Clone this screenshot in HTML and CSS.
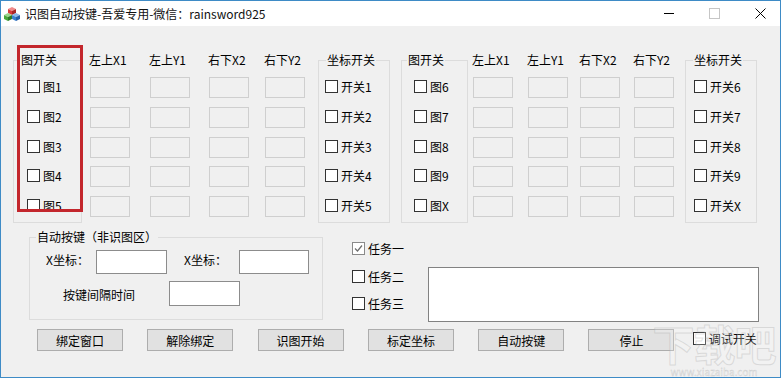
FILE: index.html
```html
<!DOCTYPE html>
<html lang="zh-CN">
<head>
  <meta charset="UTF-8" />
  <title>识图自动按键</title>
  <link rel="stylesheet" href="styles.css">
</head>
<body>

  <div class="window">
    <!-- title bar -->
    <div class="titlebar">
      <svg class="app-icon" width="16" height="16" viewBox="0 0 16 16">
        <polygon points="8,1 12,3 8,5 4,3" fill="#f08a8a"/>
        <polygon points="4,3 8,5 8,9 4,7" fill="#d83a3a"/>
        <polygon points="8,5 12,3 12,7 8,9" fill="#a82626"/>
        <polygon points="4,7 8,9 4,11 0,9" fill="#9ad48a"/>
        <polygon points="0,9 4,11 4,15 0,13" fill="#4aa83a"/>
        <polygon points="4,11 8,9 8,13 4,15" fill="#2e7a26"/>
        <polygon points="12,7 16,9 12,11 8,9" fill="#8ab8e8"/>
        <polygon points="8,9 12,11 12,15 8,13" fill="#3a82d0"/>
        <polygon points="12,11 16,9 16,13 12,15" fill="#245ea8"/>
      </svg>
      <span class="title">识图自动按键-吾爱专用-微信：rainsword925</span>
      <div class="controls">
        <span class="ctl-min"></span>
        <span class="ctl-max"></span>
        <svg class="ctl-close" width="11" height="11" viewBox="0 0 11 11">
          <path d="M0.5 0.5 L10.5 10.5 M10.5 0.5 L0.5 10.5" stroke="#000" stroke-width="1" fill="none"/>
        </svg>
      </div>
    </div>

    <div class="client">
      <!-- coordinate table -->
      <div class="coords">
        <fieldset class="grp g1">
          <legend>图开关</legend>
          <div class="chk"><span class="box"></span>图1</div>
          <div class="chk"><span class="box"></span>图2</div>
          <div class="chk"><span class="box"></span>图3</div>
          <div class="chk"><span class="box"></span>图4</div>
          <div class="chk"><span class="box"></span>图5</div>
        </fieldset>

        <div class="col x1a">
          <div class="head">左上X1</div>
          <div class="cell"></div><div class="cell"></div><div class="cell"></div><div class="cell"></div><div class="cell"></div>
        </div>
        <div class="col y1a">
          <div class="head">左上Y1</div>
          <div class="cell"></div><div class="cell"></div><div class="cell"></div><div class="cell"></div><div class="cell"></div>
        </div>
        <div class="col x2a">
          <div class="head">右下X2</div>
          <div class="cell"></div><div class="cell"></div><div class="cell"></div><div class="cell"></div><div class="cell"></div>
        </div>
        <div class="col y2a">
          <div class="head">右下Y2</div>
          <div class="cell"></div><div class="cell"></div><div class="cell"></div><div class="cell"></div><div class="cell"></div>
        </div>

        <fieldset class="grp g2">
          <legend>坐标开关</legend>
          <div class="chk"><span class="box"></span>开关1</div>
          <div class="chk"><span class="box"></span>开关2</div>
          <div class="chk"><span class="box"></span>开关3</div>
          <div class="chk"><span class="box"></span>开关4</div>
          <div class="chk"><span class="box"></span>开关5</div>
        </fieldset>

        <fieldset class="grp g3">
          <legend>图开关</legend>
          <div class="chk"><span class="box"></span>图6</div>
          <div class="chk"><span class="box"></span>图7</div>
          <div class="chk"><span class="box"></span>图8</div>
          <div class="chk"><span class="box"></span>图9</div>
          <div class="chk"><span class="box"></span>图X</div>
        </fieldset>

        <div class="col x1b">
          <div class="head">左上X1</div>
          <div class="cell"></div><div class="cell"></div><div class="cell"></div><div class="cell"></div><div class="cell"></div>
        </div>
        <div class="col y1b">
          <div class="head">左上Y1</div>
          <div class="cell"></div><div class="cell"></div><div class="cell"></div><div class="cell"></div><div class="cell"></div>
        </div>
        <div class="col x2b">
          <div class="head">右下X2</div>
          <div class="cell"></div><div class="cell"></div><div class="cell"></div><div class="cell"></div><div class="cell"></div>
        </div>
        <div class="col y2b">
          <div class="head">右下Y2</div>
          <div class="cell"></div><div class="cell"></div><div class="cell"></div><div class="cell"></div><div class="cell"></div>
        </div>

        <fieldset class="grp g4">
          <legend>坐标开关</legend>
          <div class="chk"><span class="box"></span>开关6</div>
          <div class="chk"><span class="box"></span>开关7</div>
          <div class="chk"><span class="box"></span>开关8</div>
          <div class="chk"><span class="box"></span>开关9</div>
          <div class="chk"><span class="box"></span>开关X</div>
        </fieldset>
      </div>

      <!-- auto key area -->
      <div class="auto-row">
        <fieldset class="grp auto">
          <legend>自动按键（非识图区）</legend>
          <div class="field-row">
            <span class="lbl lbl-x">X坐标：</span>
            <div class="edit"></div>
            <span class="lbl lbl-x2">X坐标：</span>
            <div class="edit edit-2"></div>
          </div>
          <div class="field-row row-gap">
            <span class="lbl lbl-gap">按键间隔时间</span>
            <div class="edit edit-gap"></div>
          </div>
        </fieldset>

        <div class="tasks">
          <div class="chk-line">
            <span class="box checked">
              <svg width="11" height="11" viewBox="0 0 11 11"><path d="M2 5.5 L4.5 8 L9 2.5" stroke="#6d6d6d" stroke-width="1.2" fill="none"/></svg>
            </span>任务一
          </div>
          <div class="chk-line"><span class="box"></span>任务二</div>
          <div class="chk-line"><span class="box"></span>任务三</div>
        </div>

        <textarea class="log"></textarea>
      </div>

      <!-- buttons -->
      <div class="buttons">
        <button>绑定窗口</button>
        <button>解除绑定</button>
        <button>识图开始</button>
        <button>标定坐标</button>
        <button>自动按键</button>
        <button>停止</button>
        <div class="chk-line debug"><span class="box"></span>调试开关</div>
      </div>
    </div>

    <div class="red-mark"></div>

    <div class="watermark">
      <div class="wm-big">下载吧</div>
      <div class="wm-url">www.xiazaiba.com</div>
    </div>
  </div>

</body>
</html>
```

FILE: styles.css
```css
body {
  margin: 0;
  background: #fff;
  font-family: "Noto Sans CJK SC", "Microsoft YaHei", sans-serif;
  font-size: 12px;
  color: #000;
}

.window {
  position: relative;
  width: 781px;
  height: 378px;
  box-sizing: border-box;
  border: 1px solid #3e8bc6;
  display: flex;
  flex-direction: column;
  overflow: hidden;
}

/* title bar */
.titlebar {
  height: 25px;
  flex: none;
  background: #fff;
  display: flex;
  align-items: center;
  padding: 0 14px 0 3px;
}

.app-icon {
  margin-right: 5px;
}

.title {
  line-height: 16px;
  color: #111;
}

.controls {
  margin-left: auto;
  display: flex;
  align-items: center;
  gap: 35px;
}

.ctl-min {
  width: 10px;
  height: 1px;
  background: #000;
}

.ctl-max {
  width: 9px;
  height: 9px;
  border: 1px solid #c6c6c6;
}

/* client area */
.client {
  flex: 1;
  background: #f0f0f0;
  padding: 27px 0 0 12px;
}

.coords {
  display: flex;
  align-items: flex-start;
}

.grp {
  margin: 0;
  padding: 0;
  min-width: 0;
  border: 1px solid #dcdcdc;
}

.grp legend {
  padding: 0 1px;
  line-height: 14px;
}

.g1, .g2, .g3, .g4 {
  padding: 10px 0 5px;
}

.g1 { width: 69px; box-sizing: border-box; padding-left: 13px; }
.g1 legend { margin-left: -7px; }

.g2 { width: 72px; box-sizing: border-box; padding-left: 6px; margin-left: 13px; }
.g2 legend { margin-left: 1px; }

.g3 { width: 67px; box-sizing: border-box; padding-left: 12px; margin-left: 11px; }
.g3 legend { margin-left: -7px; }

.g4 { width: 72px; box-sizing: border-box; padding-left: 8px; margin-left: 11px; }
.g4 legend { margin-left: -1px; }

.chk {
  height: 21px;
  display: flex;
  align-items: center;
  gap: 3px;
  margin-bottom: 8.75px;
  position: relative;
  top: -1px;
}

.chk:last-child {
  margin-bottom: 0;
}

.box {
  width: 11px;
  height: 11px;
  flex: none;
  border: 1px solid #333;
  background: #fff;
  display: flex;
  align-items: center;
  justify-content: center;
}

.box.checked {
  border-color: #8a8a8a;
}

.col {
  width: 40px;
}

.x1a { margin-left: 8px; }
.y1a { margin-left: 20px; }
.x2a { margin-left: 19px; }
.y2a { margin-left: 16px; }
.x1b { margin-left: 5px; }
.y1b { margin-left: 15px; }
.x2b { margin-left: 12px; }
.y2b { margin-left: 14px; }

.head {
  line-height: 14px;
  margin-bottom: 10px;
  margin-left: -1px;
  white-space: nowrap;
}

.cell {
  height: 21px;
  box-sizing: border-box;
  border: 1px solid #cfcfcf;
  background: #f0f0f0;
  margin-bottom: 8.75px;
}

.cell:last-child {
  margin-bottom: 0;
}

/* auto key group */
.auto-row {
  display: flex;
  align-items: flex-start;
  margin-top: 7px;
}

.auto {
  margin-left: 16px;
  width: 294px;
  box-sizing: border-box;
  padding: 6px 0 13px 16px;
}

.auto legend {
  margin-left: -10px;
}

.field-row {
  display: flex;
  align-items: center;
  height: 24px;
}

.row-gap {
  height: 25px;
  margin-top: 7px;
  padding-left: 17px;
}

.lbl {
  flex: none;
}

.lbl-x { width: 50px; position: relative; top: -3px; }
.lbl-x2 { width: 55px; margin-left: 17px; position: relative; top: -3px; }
.lbl-gap { width: 106px; position: relative; top: 1px; }

.edit {
  width: 71px;
  height: 24px;
  box-sizing: border-box;
  background: #fff;
  border: 1px solid #8c8c8c;
  flex: none;
}

.edit-2 { width: 70px; }
.edit-gap { height: 25px; }

/* task checkboxes */
.tasks {
  width: 76px;
  margin-left: 29px;
  margin-top: 12px;
  display: flex;
  flex-direction: column;
  gap: 14.5px;
}

.chk-line {
  height: 13px;
  display: flex;
  align-items: center;
  gap: 3px;
  white-space: nowrap;
}

.log {
  width: 331px;
  height: 55px;
  margin: 37px 0 0;
  box-sizing: border-box;
  border: 1px solid #828282;
  background: #fff;
  resize: none;
  padding: 0;
}

/* buttons */
.buttons {
  display: flex;
  align-items: flex-start;
  gap: 24.3px;
  margin-top: 7px;
  padding-left: 24px;
}

.buttons button {
  width: 86px;
  height: 22px;
  padding: 0;
  background: #e1e1e1;
  border: 1px solid #adadad;
  font-family: inherit;
  font-size: 12px;
  color: #000;
}

.debug {
  margin-left: -6px;
  margin-top: 3px;
}

/* red highlight drawn over the screenshot */
.red-mark {
  position: absolute;
  left: 16px;
  top: 44px;
  width: 60px;
  height: 161px;
  border: 3px solid #c3262c;
  pointer-events: none;
}

/* site watermark */
.watermark {
  position: absolute;
  right: 0;
  bottom: 0;
  width: 132px;
  text-align: center;
  pointer-events: none;
}

.wm-big {
  font-size: 42px;
  font-weight: bold;
  line-height: 46px;
  color: rgba(255, 255, 255, 0.2);
  -webkit-text-stroke: 1px rgba(170, 170, 170, 0.35);
  letter-spacing: -1px;
}

.wm-url {
  font-size: 10px;
  line-height: 11px;
  color: rgba(255, 255, 255, 0.2);
  -webkit-text-stroke: 0.4px rgba(160, 160, 160, 0.45);
}
```
